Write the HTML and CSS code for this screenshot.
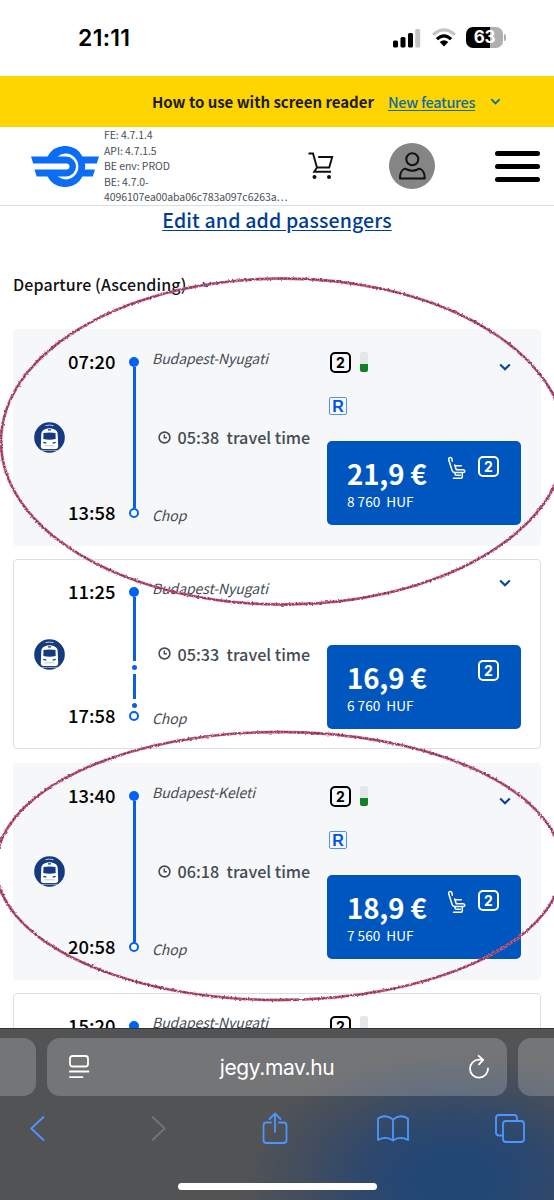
FILE: index.html
```html
<!DOCTYPE html>
<html lang="en">
<head>
<meta charset="utf-8">
<title>jegy.mav.hu</title>
<link rel="stylesheet" href="styles.css">
</head>
<body>
<svg class="defs" aria-hidden="true">
  <symbol id="chevron" viewBox="0 0 12 8"><path d="M1.2 1.4 6 6.2 10.8 1.4" fill="none" stroke="currentColor" stroke-width="2.1"/></symbol>
  <symbol id="train" viewBox="0 0 31 31">
    <circle cx="15.5" cy="15.5" r="15.3" fill="#163a80"/>
    <path d="M11.5 3.6Q15.5 2.6 19.5 3.6" stroke="#b9c8e6" stroke-width="1" fill="none"/>
    <path d="M7.3 12Q7.6 8.2 11 7.3Q15.5 5.4 20 7.3Q23.4 8.2 23.7 12L24.2 24.8Q24 27 21.500 27H9.500Q7 27 6.800 24.800Z" fill="#fff"/>
    <path d="M9.500 11Q15.500 10 21.500 11L21.700 17Q15.500 18.600 9.300 17Z" fill="#163a80"/>
    <path d="M14 7.800h3M9.300 20.300 12.300 21.100M21.700 20.300 18.700 21.100" stroke="#163a80" stroke-width="1.300"/>
    <path d="M10.300 23.800h10.400" stroke="#aebcd6" stroke-width=".8"/>
    <path d="M7 28.400h17" stroke="#c3cfe6" stroke-width=".7"/>
  </symbol>
  <symbol id="clock" viewBox="0 0 13 13"><circle cx="6.5" cy="6.5" r="5.400" fill="none" stroke="currentColor" stroke-width="1.600"/><path d="M6.300 3.400V6.800H8.900" fill="none" stroke="currentColor" stroke-width="1.400"/></symbol>
  <symbol id="seat" viewBox="0 0 20 24"><path d="M5.300 5.200 4.700 2.200Q3.800 1 2.500 1.700Q1.200 2.400 1.700 3.800L5.100 14.600Q5.700 16.400 7.500 16.400H16.300Q18 16.200 17.800 14.900Q17.500 13.800 16 13.800H9.300L7.700 9M8.700 9.700H14.300M8 16.600V18.200Q8.200 19.200 9.400 19.200H13.300M6.500 22.200H14.400Q15.300 22 15.300 20.800V16.600" fill="none" stroke="#fff" stroke-width="1.500" stroke-linecap="round" stroke-linejoin="round"/></symbol>
</svg>

<header class="status">
  <time class="clock">21:11</time>
  <div class="signals">
    <svg width="28" height="20" viewBox="0 0 28 20"><rect x="0" y="12.500" width="5" height="7" rx="1.500"/><rect x="7.500" y="9" width="5" height="10.500" rx="1.500"/><rect x="15" y="5" width="5" height="14.500" rx="1.500"/><rect x="22.200" y="1" width="5" height="18.500" rx="1.500" fill="#c4c4c4"/></svg>
    <svg class="wifi" width="24" height="19" viewBox="0 0 24 19" fill="none"><path d="M1.300 6.800Q12-3 22.700 6.800" stroke="#c4c4c4" stroke-width="3.200"/><path d="M4.900 11.200Q12 4.500 19.100 11.200" stroke="#000" stroke-width="3.200"/><path d="M7.700 14Q12 10.600 16.300 14L12 18.500Z" fill="#000"/></svg>
    <div class="battery"><span>63</span></div><i class="nub"></i>
  </div>
</header>

<div class="notice">
  <strong>How to use with screen reader</strong>
  <a class="features">New features</a>
  <svg width="11" height="7"><use href="#chevron"/></svg>
</div>

<nav class="topnav">
  <svg class="logo" width="68" height="41" viewBox="0 0 68 41">
    <path d="M0 10.500H16.500A19.800 19.800 0 0 1 51.500 10.500H68L65.800 17.500H53.800Q54.600 20.500 53.800 23.500H64L61.800 30.500H51.500A19.800 19.800 0 0 1 16.500 30.500H5.700L3.500 23.500H35.500A3 3 0 0 0 35.500 17.500H2.200Z" fill="#0b6cf5"/>
    <path d="M26.500 10.500Q31 7 36 7.600A13 13 0 0 1 36 33.400Q31 33.500 26.500 30.500H35A10 10 0 0 0 35 10.500Z" fill="#fff"/>
  </svg>
  <div class="versions">FE: 4.7.1.4<br>API: 4.7.1.5<br>BE env: PROD<br>BE: 4.7.0-<br><span>4096107ea00aba06c783a097c6263a…</span></div>
  <svg class="cart" width="26" height="28" viewBox="0 0 26 28" fill="none" stroke="#111" stroke-width="1.900"><path d="M.5 1.500H5L9 15.500H21.200L24.200 5H10.200M9 15.500 6.200 19.800H23"/><circle cx="6.500" cy="25" r="2" fill="#111" stroke="none"/><circle cx="21" cy="25" r="2" fill="#111" stroke="none"/></svg>
  <svg class="user" width="46" height="46" viewBox="0 0 46 46" fill="none" stroke="#111" stroke-width="2"><circle cx="23" cy="23" r="23" fill="#858585" stroke="none"/><circle cx="23.300" cy="16.300" r="6"/><path d="M11 35.500Q10.700 28.500 15 26Q16.500 25.300 18 26.500Q23.300 29 28.500 26.500Q30 25.300 31.500 26Q36 28.500 35.700 35.500Z" stroke-linejoin="round"/></svg>
  <div class="burger"><i></i><i></i><i></i></div>
</nav>

<main class="results">
  <a class="edit">Edit and add passengers</a>
  <div class="sort"><span>Departure (Ascending)</span><svg width="10" height="7"><use href="#chevron"/></svg></div>

  <article class="trip featured">
    <svg class="train"><use href="#train"/></svg>
    <div class="times"><time>07:20</time><time>13:58</time></div>
    <div class="rail"><i class="start"></i><i class="line"></i><i class="end"></i></div>
    <div class="stops"><em>Budapest-Nyugati</em><div class="duration"><svg><use href="#clock"/></svg><span>05:38&nbsp; travel time</span></div><em>Chop</em></div>
    <div class="offer">
      <div class="tags"><span class="cls">2</span><i class="load"></i><svg class="open"><use href="#chevron"/></svg></div>
      <span class="reserve">R</span>
      <div class="buy"><div><b>21,9 €</b><small>8 760&nbsp; HUF</small></div><svg class="seat"><use href="#seat"/></svg><span class="cls">2</span></div>
    </div>
  </article>

  <article class="trip plain">
    <svg class="train"><use href="#train"/></svg>
    <div class="times"><time>11:25</time><time>17:58</time></div>
    <div class="rail"><i class="start"></i><i class="line"></i><i class="dot"></i><i class="line short"></i><i class="dot"></i><i class="end"></i></div>
    <div class="stops"><em>Budapest-Nyugati</em><div class="duration"><svg><use href="#clock"/></svg><span>05:33&nbsp; travel time</span></div><em>Chop</em></div>
    <div class="offer">
      <div class="tags"><svg class="open"><use href="#chevron"/></svg></div>
      <div class="buy"><div><b>16,9 €</b><small>6 760&nbsp; HUF</small></div><span class="cls">2</span></div>
    </div>
  </article>

  <article class="trip featured">
    <svg class="train"><use href="#train"/></svg>
    <div class="times"><time>13:40</time><time>20:58</time></div>
    <div class="rail"><i class="start"></i><i class="line"></i><i class="end"></i></div>
    <div class="stops"><em>Budapest-Keleti</em><div class="duration"><svg><use href="#clock"/></svg><span>06:18&nbsp; travel time</span></div><em>Chop</em></div>
    <div class="offer">
      <div class="tags"><span class="cls">2</span><i class="load"></i><svg class="open"><use href="#chevron"/></svg></div>
      <span class="reserve">R</span>
      <div class="buy"><div><b>18,9 €</b><small>7 560&nbsp; HUF</small></div><svg class="seat"><use href="#seat"/></svg><span class="cls">2</span></div>
    </div>
  </article>

  <article class="trip plain partial">
    <div class="times"><time>15:20</time></div>
    <div class="rail"><i class="start"></i><i class="line"></i></div>
    <div class="stops"><em>Budapest-Nyugati</em></div>
    <div class="offer"><div class="tags"><span class="cls">2</span><i class="load"></i></div></div>
  </article>
</main>

<footer class="browser">
  <div class="tabs">
    <div class="tab side"></div>
    <div class="tab current">
      <svg width="22" height="24" viewBox="0 0 22 24" fill="none" stroke="#fff" stroke-width="1.800" stroke-linecap="round"><rect x="1" y="1" width="18" height="10.500" rx="2.500"/><path d="M.9 16.500H19.500M.9 22.200H13.500"/></svg>
      <span>jegy.mav.hu</span>
      <svg width="22" height="24" viewBox="0 0 22 24" fill="none" stroke="#fff" stroke-width="1.800" stroke-linecap="round" stroke-linejoin="round"><path d="M20 13.500A9 9 0 1 1 11 4.700H15.200M10.700 .9 15.200 4.900 11 9.400"/></svg>
    </div>
    <div class="tab side"></div>
  </div>
  <div class="tools">
    <svg width="15" height="25" viewBox="0 0 15 25"><path d="M13.500 1 1.300 12.500 13.500 24"/></svg>
    <svg class="off" width="15" height="25" viewBox="0 0 15 25"><path d="M1.500 1 13.700 12.500 1.500 24"/></svg>
    <svg width="26" height="32" viewBox="0 0 26 32"><path d="M9 10.500H4.500Q1.500 10.500 1.500 13.500V28Q1.500 31 4.500 31H21.500Q24.500 31 24.500 28V13.500Q24.500 10.500 21.500 10.500H17M13 20V1.500M7.500 7 13 1.500 18.500 7"/></svg>
    <svg width="32" height="27" viewBox="0 0 32 27"><path d="M16 4.500Q9-1.500 1 3.500V25Q9 20.500 16 25.500Q23 20.500 31 25V3.500Q23-1.500 16 4.500V25.500"/></svg>
    <svg width="30" height="29" viewBox="0 0 30 29"><path d="M7.500 21.500H4Q1 21.500 1 18.500V4Q1 1 4 1H19Q22 1 22 4V7"/><rect x="8" y="7" width="21" height="21" rx="3"/></svg>
  </div>
  <div class="home"></div>
</footer>

<svg class="marks" width="554" height="1028" viewBox="0 0 554 1028">
  <filter id="rough" filterUnits="userSpaceOnUse" x="-10" y="270" width="580" height="740"><feTurbulence type="fractalNoise" baseFrequency=".5" numOctaves="2" seed="4"/><feDisplacementMap in="SourceGraphic" scale="2.8" xChannelSelector="R" yChannelSelector="G"/></filter>
  <g fill="none" filter="url(#rough)">
    <g stroke="#c06a8c" stroke-width="2.900"><ellipse cx="283" cy="441.500" rx="282" ry="163"/><ellipse cx="279" cy="866" rx="283" ry="134"/></g>
    <g stroke="#8f3056" stroke-width="1.500" stroke-dasharray="3 1"><ellipse cx="283" cy="441.500" rx="282" ry="163"/><ellipse cx="279" cy="866" rx="283" ry="134"/></g>
  </g>
</svg>
</body>
</html>
```
FILE: styles.css
```css
* { box-sizing: border-box; }
body {
  margin: 0;
  width: 554px;
  height: 1200px;
  overflow: hidden;
  position: relative;
  display: flex;
  flex-direction: column;
  background: #fff;
  color: #000;
  font-family: "Noto Sans CJK SC", "Open Sans", sans-serif;
}
svg { display: block; flex: none; }
i { display: block; }
.defs { position: absolute; width: 0; height: 0; }

.status { height: 76px; flex: none; display: flex; align-items: flex-start; justify-content: space-between; padding: 25px 48px 0 78px; }
.status .clock { font: 600 23px/26px Inter, sans-serif; letter-spacing: .3px; }
.signals { display: flex; align-items: center; padding-top: 2px; }
.wifi { margin: 0 10px 0 11px; }
.battery { width: 37px; height: 21px; border-radius: 7px; background: linear-gradient(90deg, #000 65%, #b0b0b0 65%); color: #fff; font: 700 17px/21px Inter, sans-serif; letter-spacing: -.3px; text-align: center; }
.nub { width: 2px; height: 7px; margin-left: 1px; border-radius: 0 2px 2px 0; background: #b0b0b0; }

.notice { height: 51px; flex: none; display: flex; align-items: center; padding-left: 152px; background: #ffd500; font-size: 15px; line-height: 20px; white-space: nowrap; }
.notice strong { width: 236px; color: #1c1c1c; font-weight: 700; letter-spacing: -.02px; }
.features { width: 102px; color: #0f6cab; font-size: 14.5px; font-weight: 500; letter-spacing: -.3px; text-decoration: underline; text-underline-offset: 2px; }
.notice svg { color: #0f6cab; }

.topnav { height: 79px; flex: none; display: flex; align-items: center; padding-left: 31px; border-bottom: 1px solid #d9dce0; }
.versions { width: 203px; margin-left: 5px; color: #4a5058; font-size: 10.5px; line-height: 15.5px; letter-spacing: -.07px; white-space: nowrap; }
.cart { margin-left: 1px; }
.user { margin-left: 55px; }
.burger { width: 45px; height: 31px; margin-left: 60px; display: flex; flex-direction: column; justify-content: space-between; }
.burger i { height: 5px; border-radius: 3px; background: #000; }

.results { height: 822px; flex: none; overflow: hidden; padding: 0 13px; display: flex; flex-direction: column; }
.edit { flex: none; align-self: center; height: 28px; color: #003c96; font-size: 19.5px; font-weight: 500; line-height: 27px; letter-spacing: .15px; text-decoration: underline; text-underline-offset: 2px; }
.sort { flex: none; display: flex; align-items: center; gap: 15px; height: 24px; margin: 38px 0 33px; font-size: 16px; font-weight: 500; line-height: 24px; letter-spacing: .1px; color: #111; }
.sort svg { color: #003c96; }

.trip { flex: none; display: flex; width: 528px; padding: 0 19px 0 20px; border: 1px solid transparent; border-radius: 4px; margin-bottom: 13px; }
.trip > * { flex: none; }
.featured { height: 217px; background: #f5f7f9; }
.plain { height: 190px; border-color: #dcdfe2; margin-bottom: 14px; }
.partial { height: 217px; padding-left: 54px; }
.train { align-self: center; width: 31px; height: 31px; margin-right: 3px; }
.times { width: 59px; padding: 20.5px 0 23.5px; display: flex; flex-direction: column; justify-content: space-between; font-size: 18.4px; font-weight: 500; line-height: 20px; }
.rail { width: 14px; padding: 27px 0; display: flex; flex-direction: column; align-items: center; }
.start, .end { flex: none; width: 10px; height: 10px; border-radius: 50%; background: #0062f5; }
.end { border: 2px solid #0062f5; background: #fff; }
.line { flex: 1; width: 3px; background: #0b5fe0; }
.short { flex: none; height: 25px; }
.dot { flex: none; width: 5px; height: 5px; margin: 4px 0; border-radius: 50%; background: #0b5fe0; }
.short + .dot { margin-bottom: 3px; }
.stops { width: 186px; padding: 17.5px 0 20.5px 11px; display: flex; flex-direction: column; justify-content: space-between; color: #454b54; white-space: nowrap; }
.stops em { font-size: 14px; line-height: 20px; letter-spacing: -.07px; }
.duration { display: flex; align-items: center; gap: 6.5px; padding: 2px 0 0 6px; font-size: 16.2px; font-weight: 500; line-height: 20px; }
.duration svg { width: 13px; height: 13px; }
.offer { width: 194px; padding: 22px 0 20px; display: flex; flex-direction: column; }
.plain .offer { padding-bottom: 19px; }
.tags { display: flex; height: 21px; padding-left: 3px; }
.cls { width: 21px; height: 21px; border: 2px solid currentColor; border-radius: 5px; font: 700 14px/17px Inter, sans-serif; text-align: center; }
.load { width: 8px; height: 20px; margin-left: 9px; border-radius: 2px; background: linear-gradient(#e4e6e7 60%, #128026 60%); }
.open { width: 12px; height: 8px; margin: 11px 10px 0 auto; color: #0742a4; }
.plain .open { margin-top: -3px; }
.reserve { width: 18px; height: 18px; margin: 24px 0 0 2px; border: 1px solid #5a8fe0; border-radius: 2px; background: #f4f8ff; color: #0055e0; font: 700 16px/17px "Liberation Sans", sans-serif; text-align: center; }
.buy { display: flex; height: 84px; margin-top: auto; padding: 15px 22px 0 20px; border-radius: 5px; background: #0056bf; color: #fff; }
.buy > div { margin-right: auto; }
.buy b { display: block; font-size: 27.6px; line-height: 34px; letter-spacing: -.1px; }
.buy small { display: block; margin-top: 1px; font-size: 13.6px; line-height: 20px; }
.seat { width: 20px; height: 24px; margin-right: 11px; }

.browser { position: relative; height: 172px; flex: none; padding-top: 9px; border-top: 1px solid #333; background: radial-gradient(ellipse 210px 130px at 455px 150px, #234775 20%, #2e486c 45%, #424d5e 72%, #525355 100%); }
.tabs { display: flex; gap: 11px; height: 58px; }
.tab { background: rgba(255, 255, 255, .2); border-radius: 13px; }
.side { width: 36px; border-radius: 0 13px 13px 0; }
.current { width: 461px; padding: 0 17px 0 22px; display: flex; align-items: center; justify-content: space-between; color: #fff; font: 400 21px/30px Inter, sans-serif; letter-spacing: -.4px; }
.current span { margin: 2px 5px 0 0; }
.current + .side { border-radius: 13px 0 0 13px; }
.tools { display: grid; grid-template-columns: 74px 168px 65px 171px 64px; justify-items: center; align-items: center; height: 32px; margin-top: 16px; }
.tools svg { fill: none; stroke: #4b97ff; stroke-width: 1.8; stroke-linecap: round; stroke-linejoin: round; }
.tools .off { stroke: #747577; }
.home { width: 199px; height: 7px; margin: 39px auto 0; border-radius: 4px; background: #fff; }
.marks { position: absolute; left: 0; top: 0; pointer-events: none; }
```
